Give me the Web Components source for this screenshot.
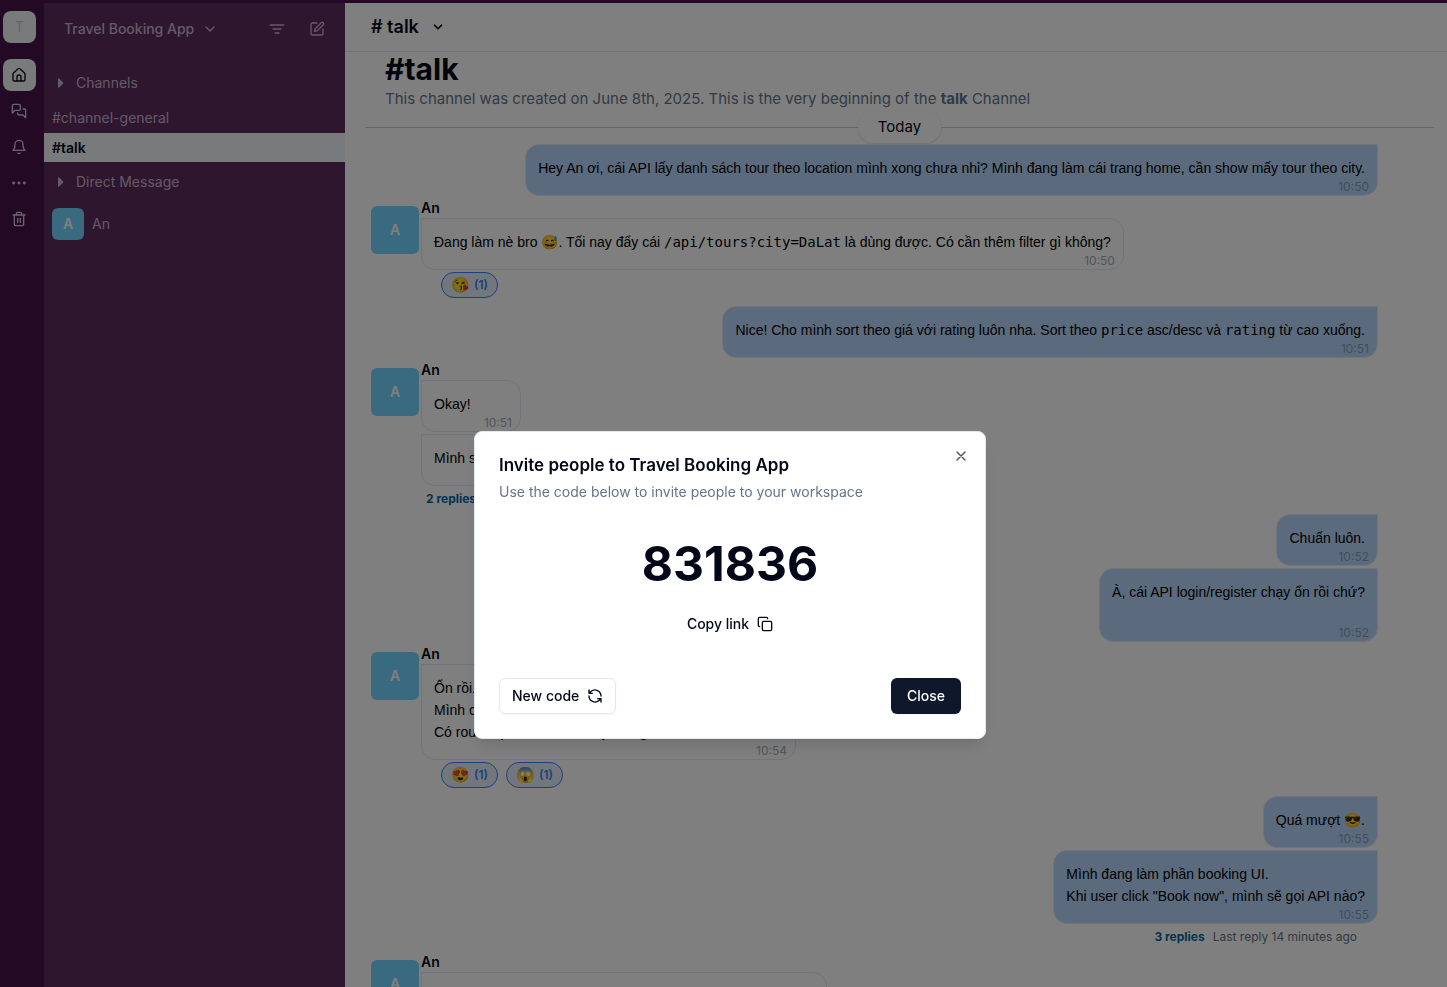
<!DOCTYPE html>
<html lang="en">
<head>
<meta charset="utf-8">
<meta name="viewport" content="width=device-width, initial-scale=1">
<title>Travel Booking App – #talk</title>
<style>
  html, body { margin: 0; height: 100%; overflow: hidden; }
  body { font-family: Inter, "Noto Sans", sans-serif; font-size: 14px; line-height: 20px; color: #020817; background: #fff; }
</style>
</head>
<body>
<workspace-app>
  <workspace-rail slot="rail"></workspace-rail>
  <channel-sidebar slot="sidebar" workspace="Travel Booking App"></channel-sidebar>
  <chat-header slot="header" channel="talk"></chat-header>
  <channel-intro channel="talk">This channel was created on June 8th, 2025. This is the very beginning of the <strong>talk</strong> Channel</channel-intro>
  <day-divider>Today</day-divider>

  <message-group own>
    <chat-bubble own time="10:50">Hey An ơi, cái API lấy danh sách tour theo location mình xong chưa nhỉ? Mình đang làm cái trang home, cần show mấy tour theo city.</chat-bubble>
  </message-group>
  <message-group author="An">
    <chat-bubble time="10:50">Đang làm nè bro 😅. Tối nay đẩy cái <code>/api/tours?city=DaLat</code> là dùng được. Có cần thêm filter gì không?</chat-bubble>
    <reaction-list><reaction-pill count="1">😘</reaction-pill></reaction-list>
  </message-group>
  <message-group own>
    <chat-bubble own time="10:51">Nice! Cho mình sort theo giá với rating luôn nha. Sort theo <code>price</code> asc/desc và <code>rating</code> từ cao xuống.</chat-bubble>
  </message-group>
  <message-group author="An">
    <chat-bubble time="10:51">Okay!</chat-bubble>
    <chat-bubble time="10:52">Mình sẽ thêm query sort luôn nhé.</chat-bubble>
    <thread-link count="2 replies">Last reply 14 minutes ago</thread-link>
  </message-group>
  <message-group own>
    <chat-bubble own time="10:52">Chuẩn luôn.</chat-bubble>
    <chat-bubble own time="10:52">À, cái API login/register chạy ổn rồi chứ?<br><br></chat-bubble>
  </message-group>
  <message-group author="An">
    <chat-bubble time="10:54">Ổn rồi.<br>Mình có trả JWT luôn.<br>Có route <code>/profiles</code> để lấy thông tin user nha <code>(user)</code>.</chat-bubble>
    <reaction-list><reaction-pill count="1">😍</reaction-pill><reaction-pill count="1">😱</reaction-pill></reaction-list>
  </message-group>
  <message-group own>
    <chat-bubble own time="10:55">Quá mượt 😎.</chat-bubble>
    <chat-bubble own time="10:55">Mình đang làm phần booking UI.<br>Khi user click "Book now", mình sẽ gọi API nào?</chat-bubble>
    <thread-link own count="3 replies">Last reply 14 minutes ago</thread-link>
  </message-group>
  <message-group author="An">
    <chat-bubble time="10:56">Gọi <code>POST /api/bookings</code> nha, nhớ gửi kèm luôn token để</chat-bubble>
  </message-group>

  <invite-dialog slot="overlay" workspace="Travel Booking App" code="831836"></invite-dialog>
</workspace-app>

<script>
const ICONS = {
  home: '<path d="M15 21v-6a3 3 0 0 0-6 0v6"/><path d="M3 10.5a2 2 0 0 1 .7-1.5l7-6.3a2 2 0 0 1 2.6 0l7 6.3a2 2 0 0 1 .7 1.5V19a2 2 0 0 1-2 2H5a2 2 0 0 1-2-2z"/>',
  chats: '<path d="M14 9a2 2 0 0 1-2 2H6l-4 4V4a2 2 0 0 1 2-2h8a2 2 0 0 1 2 2z"/><path d="M18 9h2a2 2 0 0 1 2 2v11l-4-4h-6a2 2 0 0 1-2-2v-1"/>',
  bell: '<path d="M6 8a6 6 0 0 1 12 0c0 7 3 9 3 9H3s3-2 3-9"/><path d="M10.3 21a2 2 0 0 0 3.4 0"/>',
  more: '<g stroke="none" fill="currentColor"><circle cx="4" cy="12" r="2.200"/><circle cx="12" cy="12" r="2.200"/><circle cx="20" cy="12" r="2.200"/></g>',
  trash: '<path d="M3 6h18M19 6v14a2 2 0 0 1-2 2H7a2 2 0 0 1-2-2V6M8 6V4a2 2 0 0 1 2-2h4a2 2 0 0 1 2 2v2M10 11v6M14 11v6"/>',
  down: '<path d="m6 9 6 6 6-6"/>',
  filter: '<path d="M2 6h20M6 12h12M9 18h6"/>',
  compose: '<path d="M12 3H5a2 2 0 0 0-2 2v14a2 2 0 0 0 2 2h14a2 2 0 0 0 2-2v-7"/><path d="M18.4 2.6a2.1 2.1 0 0 1 3 3L12.4 14.6l-4.4 1.4 1.4-4.4z"/>',
  caret: '<path d="M10 6v12l6-6z" fill="currentColor"/>',
  close: '<path d="M18 6 6 18M6 6l12 12"/>',
  copy: '<rect x="8" y="8" width="14" height="14" rx="2"/><path d="M4 16a2 2 0 0 1-2-2V4a2 2 0 0 1 2-2h10a2 2 0 0 1 2 2"/>',
  refresh: '<path d="M21 12A9 9 0 0 0 6 5.300L3 8M3 3v5h5M3 12a9 9 0 0 0 15 6.700l3-2.700M16 16h5v5"/>'
};

function component(name, render) {
  customElements.define(name, class extends HTMLElement {
    connectedCallback() {
      if (this.shadowRoot) return;
      const template = document.createElement('template');
      template.innerHTML = render(this);
      this.attachShadow({ mode: 'open' }).append(template.content.cloneNode(true));
    }
  });
}

const RESET = `*{box-sizing:border-box}
  button{font:inherit;color:inherit;background:none;border:0;padding:0;margin:0;cursor:pointer;display:flex;align-items:center}
  h1,h2,p{margin:0}`;

component('ui-icon', el => `
  <style>:host{display:inline-flex;flex:none}svg{display:block}</style>
  <svg width="${el.getAttribute('size') || 16}" height="${el.getAttribute('size') || 16}" viewBox="0 0 24 24" fill="none"
    stroke="currentColor" stroke-width="${el.getAttribute('weight') || 2}" stroke-linecap="round" stroke-linejoin="round" aria-hidden="true">${ICONS[el.getAttribute('name')]}</svg>`);

component('user-avatar', el => `
  <style>
    :host{display:flex;flex:none;align-items:center;justify-content:center;width:48px;height:48px;border-radius:6px;
      background:#74d4ff;color:#fff;font-weight:600}
    :host([small]){width:32px;height:32px}
  </style><slot></slot>`);

component('workspace-app', () => `
  <style>${RESET}
    :host{display:flex;flex-direction:column;height:100vh;overflow:hidden;border-top:3px solid #481349;box-sizing:border-box}
    .columns{display:flex;flex:1;min-height:0}
    .main{flex:1;min-width:0;display:flex;flex-direction:column;background:#fff}
    .messages{flex:1;min-height:0;overflow:hidden;padding:0 13px 0 20px}
  </style>
  <div class="columns">
    <slot name="rail"></slot><slot name="sidebar"></slot>
    <main class="main"><slot name="header"></slot><div class="messages"><slot></slot></div></main>
  </div>
  <slot name="overlay"></slot>`);

component('workspace-rail', () => `
  <style>${RESET}
    :host{display:block;flex:none;width:44px;background:#481349;color:#d5c7d7}
    nav{display:flex;flex-direction:column;gap:4px;padding:8px 8px 0 3px}
    button{height:32px;justify-content:center;border-radius:8px;padding-right:1px}
    .logo{background:#f1f5f9;color:#e3b9e3;margin-bottom:12px;padding:0}
    .on{background:#f1f5f9;color:#020817}
  </style>
  <nav aria-label="Workspace">
    <button class="logo">T</button>
    <button class="on" aria-label="Home"><ui-icon name="home"></ui-icon></button>
    <button aria-label="Messages"><ui-icon name="chats"></ui-icon></button>
    <button aria-label="Notifications"><ui-icon name="bell"></ui-icon></button>
    <button aria-label="More"><ui-icon name="more"></ui-icon></button>
    <button aria-label="Trash"><ui-icon name="trash"></ui-icon></button>
  </nav>`);

component('channel-sidebar', el => `
  <style>${RESET}
    :host{display:block;flex:none;width:301px;background:#5e2c5f;color:#c9b4cd}
    header{display:flex;align-items:center;height:52px;padding:0 20px}
    .name{gap:8px;font-weight:500;margin-right:auto}
    .tools{display:flex;gap:24px}
    .section{height:30px;padding-left:8px;gap:8px;margin-top:13px}
    .dm{margin-top:5px}
    a{display:flex;align-items:center;height:30px;padding:0 8px;color:inherit;text-decoration:none}
    .channels{margin-top:5px}
    a.on{background:#f1f5f9;color:#020817;font-weight:600;height:29px}
    a.person{height:44px;gap:8px;margin-top:5px}
  </style>
  <header>
    <button class="name">${el.getAttribute('workspace')}<ui-icon name="down"></ui-icon></button>
    <div class="tools">
      <button aria-label="Filter"><ui-icon name="filter"></ui-icon></button>
      <button aria-label="New message"><ui-icon name="compose"></ui-icon></button>
    </div>
  </header>
  <button class="section"><ui-icon name="caret"></ui-icon>Channels</button>
  <nav class="channels" aria-label="Channels">
    <a href="#channel-general">#channel-general</a>
    <a class="on" href="#talk">#talk</a>
  </nav>
  <button class="section dm"><ui-icon name="caret"></ui-icon>Direct Message</button>
  <a class="person" href="#an"><user-avatar small>A</user-avatar>An</a>`);

component('chat-header', el => `
  <style>${RESET}
    :host{display:flex;align-items:center;flex:none;height:49px;padding:0 26px;border-bottom:1px solid #e2e8f0;box-sizing:border-box}
    button{gap:12px;font-size:18px;line-height:28px;font-weight:600}
  </style>
  <button># ${el.getAttribute('channel')}<ui-icon name="down" size="14" weight="3"></ui-icon></button>`);

component('channel-intro', el => `
  <style>${RESET}
    :host{display:block;padding:0 20px}
    h1{font-size:30px;line-height:35px;font-weight:700}
    p{font-size:15px;line-height:24px;color:#64748b}
  </style>
  <h1>#${el.getAttribute('channel')}</h1><p><slot></slot></p>`);

component('day-divider', () => `
  <style>
    :host{display:flex;align-items:center;height:32px;margin-bottom:1px}
    :host::before,:host::after{content:"";flex:1;height:1px;background:#cbced4}
    span{font-size:15px;line-height:24px;padding:4px 20px;border-radius:16px;box-shadow:0 1px 3px rgba(0,0,0,.15)}
  </style><span><slot></slot></span>`);

component('message-group', el => el.hasAttribute('own') ? `
  <style>
    :host{display:flex;flex-direction:column;align-items:flex-end;gap:2px;margin-bottom:2px;padding-right:56px}
  </style><slot></slot>` : `
  <style>
    :host{display:flex;gap:2px;margin-bottom:2px;padding-left:6px}
    user-avatar{margin-top:8px}
    .body{display:flex;flex-direction:column;align-items:flex-start;min-width:0}
    .list{display:flex;flex-direction:column;align-items:flex-start;gap:2px}
    .author{font-weight:600;line-height:20px}
  </style>
  <user-avatar>${el.getAttribute('author')[0]}</user-avatar>
  <div class="body"><span class="author">${el.getAttribute('author')}</span><div class="list"><slot></slot></div></div>`);

component('chat-bubble', el => `
  <style>
    :host{display:flex;flex-direction:column;box-sizing:border-box;min-width:100px;border:1px solid #e2e8f0;border-radius:0 14px 14px 14px;padding-top:12px}
    :host([own]){background:#b7d6fb;border-radius:14px 0 14px 14px}
    .text{padding:0 12px;font-family:"Liberation Sans",Arial,sans-serif;line-height:22px;color:#000}
    ::slotted(code){font-family:"DejaVu Sans Mono",monospace;font-size:14px;line-height:20px}
    time{align-self:flex-end;padding-right:8px;font-size:12px;line-height:16px;color:#64748b;opacity:.6}
  </style>
  <div class="text"><slot></slot></div><time>${el.getAttribute('time')}</time>`);

component('reaction-list', () => `
  <style>:host{display:flex;gap:8px;padding:0 0 6px 20px}</style><slot></slot>`);

component('reaction-pill', el => `
  <style>${RESET}
    button{height:26px;padding:0 9px;gap:4px;border:1px solid #3b82f6;border-radius:13px;background:#e4eefb;color:#3b82f6;font-size:12px;font-weight:600}
    .emoji{font-size:15px}
  </style>
  <button><span class="emoji"><slot></slot></span>(${el.getAttribute('count')})</button>`);

component('thread-link', el => `
  <style>${RESET}
    :host{display:block;padding:0 0 2px 5px}
    :host([own]){padding-right:21px}
    button{gap:8px;font-size:12px;line-height:22px;color:#64748b}
    strong{font-weight:700;color:#0369a1}
  </style>
  <button><strong>${el.getAttribute('count')}</strong><slot></slot></button>`);

component('invite-dialog', el => `
  <style>${RESET}
    :host{position:fixed;inset:0;display:flex;justify-content:center;align-items:flex-start;padding:431px 0 0 13px;background:rgba(0,0,0,.5);box-sizing:border-box}
    dialog{position:relative;width:512px;max-width:100%;margin:0;padding:24px;border:1px solid #e2e8f0;border-radius:8px;background:#fff;color:#020817;
      box-shadow:0 10px 15px -3px rgba(0,0,0,.1),0 4px 6px -4px rgba(0,0,0,.1)}
    h2{font-size:17px;line-height:18px;font-weight:600}
    p{margin-top:8px;color:#64748b}
    .content{display:flex;flex-direction:column;align-items:center;gap:20px;padding:38px 0}
    .code{font-size:48px;line-height:48px;font-weight:700}
    .copy{height:32px}
    footer{display:flex;justify-content:space-between}
    button{gap:8px;font-weight:500}
    footer button{height:36px;border-radius:6px;padding:0 16px;box-shadow:0 1px 2px rgba(0,0,0,.05)}
    .new{border:1px solid #e2e8f0;padding:0 12px}
    .done{background:#0f172a;color:#f8fafc}
    .x{position:absolute;top:16px;right:16px;opacity:.7}
  </style>
  <dialog open aria-labelledby="title">
    <h2 id="title">Invite people to ${el.getAttribute('workspace')}</h2>
    <p>Use the code below to invite people to your workspace</p>
    <div class="content">
      <span class="code">${el.getAttribute('code')}</span>
      <button class="copy">Copy link<ui-icon name="copy"></ui-icon></button>
    </div>
    <footer>
      <button class="new">New code<ui-icon name="refresh"></ui-icon></button>
      <button class="done">Close</button>
    </footer>
    <button class="x" aria-label="Dismiss"><ui-icon name="close"></ui-icon></button>
  </dialog>`);
</script>
</body>
</html>
